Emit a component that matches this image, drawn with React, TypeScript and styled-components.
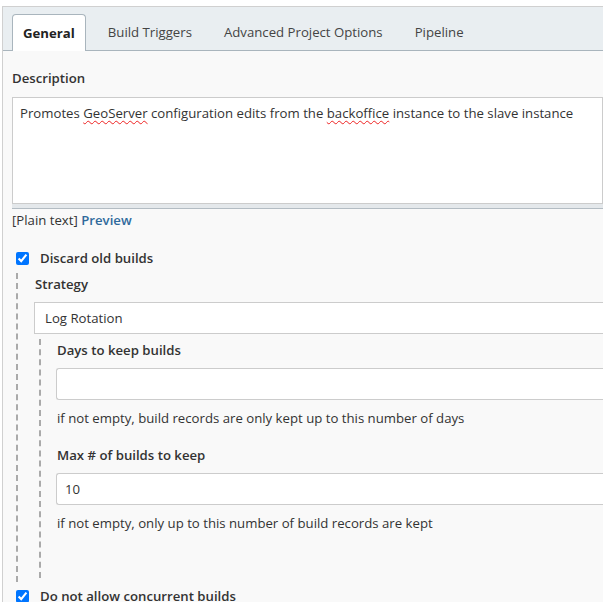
import styled, { createGlobalStyle } from 'styled-components';

const GlobalStyle = createGlobalStyle`
  body {
    margin: 0;
    background: #fff;
    font-family: "Open Sans", "Noto Sans", Arial, sans-serif;
    font-size: 13.2px;
    color: #333;
  }
`;

const Panel = styled.div`
  margin: 6px 0 0 2px;
  border-left: 1px solid #d0d0d0;
  border-top: 1px solid #d0d0d0;
  background: #f9f9f9;
  height: 596px;
  overflow: hidden;
`;

const TabBar = styled.div`
  display: flex;
  align-items: flex-end;
  height: 43px;
  padding-left: 9px;
  background: #e9eef1;
  border-bottom: 1px solid #a9b5bd;
`;

const Tab = styled.div<{ $active?: boolean }>`
  display: flex;
  align-items: center;
  height: ${p => (p.$active ? '37px' : '36px')};
  padding: 0 ${p => (p.$active ? '10px' : '16px')};
  margin-right: ${p => (p.$active ? '6px' : '0')};
  margin-bottom: ${p => (p.$active ? '-1px' : '0')};
  box-sizing: border-box;
  background: ${p => (p.$active ? '#fff' : 'transparent')};
  border: ${p => (p.$active ? '1px solid #a9b5bd' : 'none')};
  border-bottom: none;
  border-radius: 4px 4px 0 0;
  font-weight: ${p => (p.$active ? 700 : 400)};
  color: ${p => (p.$active ? '#222' : '#444')};
  white-space: nowrap;
`;

const Content = styled.div`
  padding: 17px 0 0 9px;
`;

const Label = styled.div`
  font-weight: 600;
  line-height: 20px;
  color: #333;
`;

const TextArea = styled.div`
  margin-top: 9px;
  height: 107px;
  box-sizing: border-box;
  padding: 5px 7px;
  background: #fff;
  border: 1px solid #ccc;
  line-height: 20px;
  white-space: nowrap;
`;

const Misspelled = styled.span`
  text-decoration: underline wavy #e22;
  text-decoration-thickness: 1px;
  text-underline-offset: 2px;
`;

const Handle = styled.div`
  height: 4px;
  background: #e4e8eb;
  border-bottom: 1px solid #b3bcc3;
`;

const FormatRow = styled.div`
  margin-top: 1px;
  line-height: 20px;
`;

const PreviewLink = styled.a`
  color: #2f6a9c;
  font-weight: 600;
  text-decoration: none;
`;

const CheckRow = styled.label<{ $top: number }>`
  display: flex;
  align-items: center;
  gap: 11px;
  margin: ${p => p.$top}px 0 0 4px;
  height: 20px;
  font-weight: 600;
`;

const Check = styled.input`
  width: 13px;
  height: 13px;
  margin: 0;
  accent-color: #0075ff;
`;

const Nested = styled.div<{ $top: number; $left: number; $pad: number; $inset: number }>`
  margin: ${p => p.$top}px 0 0 ${p => p.$left}px;
  padding: 1px 0 ${p => p.$pad}px ${p => p.$inset}px;
  border-left: 2px dashed #aaa;
`;

const Field = styled.div<{ $radius?: boolean }>`
  margin-top: 8px;
  margin-left: -1px;
  height: 32px;
  box-sizing: border-box;
  display: flex;
  align-items: center;
  padding: 0 ${p => (p.$radius ? '8px' : '10px')};
  background: #fff;
  border: 1px solid #ccc;
  border-right: none;
  border-radius: ${p => (p.$radius ? '3px 0 0 3px' : '0')};
`;

const Help = styled.div`
  margin-top: 8px;
  line-height: 20px;
  color: #333;
`;

const SubLabel = styled(Label)<{ $top?: number }>`
  margin-top: ${p => p.$top ?? 0}px;
`;

export default function App() {
  return (
    <>
      <GlobalStyle />
      <Panel>
        <TabBar>
          <Tab $active>General</Tab>
          <Tab>Build Triggers</Tab>
          <Tab>Advanced Project Options</Tab>
          <Tab>Pipeline</Tab>
        </TabBar>
        <Content>
          <Label>Description</Label>
          <TextArea>
            Promotes <Misspelled>GeoServer</Misspelled> configuration edits from the{' '}
            <Misspelled>backoffice</Misspelled> instance to the slave instance
          </TextArea>
          <Handle />
          <FormatRow>
            [Plain text] <PreviewLink href="#">Preview</PreviewLink>
          </FormatRow>
          <CheckRow $top={18}>
            <Check type="checkbox" defaultChecked />
            Discard old builds
          </CheckRow>
          <Nested $top={5} $left={4} $pad={4} $inset={17}>
            <Label>Strategy</Label>
            <Field>Log Rotation</Field>
            <Nested $top={5} $left={4} $pad={45} $inset={16}>
              <SubLabel>Days to keep builds</SubLabel>
              <Field $radius />
              <Help>if not empty, build records are only kept up to this number of days</Help>
              <SubLabel $top={17}>Max # of builds to keep</SubLabel>
              <Field $radius>10</Field>
              <Help>if not empty, only up to this number of build records are kept</Help>
            </Nested>
          </Nested>
          <CheckRow $top={4}>
            <Check type="checkbox" defaultChecked />
            Do not allow concurrent builds
          </CheckRow>
        </Content>
      </Panel>
    </>
  );
}
